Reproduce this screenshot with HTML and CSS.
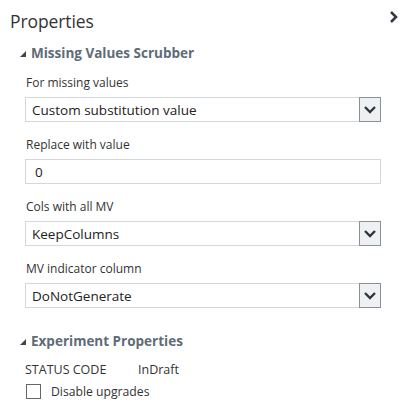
FILE: index.html
```html
<!DOCTYPE html>
<html>
<head>
<meta charset="utf-8">
<link rel="stylesheet" href="styles.css">
</head>
<body>
<div class="panel">
  <div class="title-row">
    <div class="title">Properties</div>
    <svg class="collapse" width="9" height="12" viewBox="0 0 9 12"><path d="M2 1 L7 6 L2 11" fill="none" stroke="#333a44" stroke-width="2.6"/></svg>
  </div>

  <div class="section-head">
    <svg class="tri" width="6" height="6" viewBox="0 0 6 6"><path d="M6 0 L6 6 L0 6 Z" fill="#444"/></svg>
    <span>Missing Values Scrubber</span>
  </div>

  <div class="fields">
    <div class="field">
      <div class="label">For missing values</div>
      <div class="select"><span class="value">Custom substitution value</span><span class="btn"><svg width="12" height="8" viewBox="0 0 12 8"><path d="M1 1 L6 6 L11 1" fill="none" stroke="#2f3640" stroke-width="2.4"/></svg></span></div>
    </div>
    <div class="field">
      <div class="label">Replace with value</div>
      <div class="input"><span class="value">0</span></div>
    </div>
    <div class="field">
      <div class="label">Cols with all MV</div>
      <div class="select"><span class="value">KeepColumns</span><span class="btn"><svg width="12" height="8" viewBox="0 0 12 8"><path d="M1 1 L6 6 L11 1" fill="none" stroke="#2f3640" stroke-width="2.4"/></svg></span></div>
    </div>
    <div class="field">
      <div class="label">MV indicator column</div>
      <div class="select"><span class="value">DoNotGenerate</span><span class="btn"><svg width="12" height="8" viewBox="0 0 12 8"><path d="M1 1 L6 6 L11 1" fill="none" stroke="#2f3640" stroke-width="2.4"/></svg></span></div>
    </div>
  </div>

  <div class="section-head second">
    <svg class="tri" width="6" height="6" viewBox="0 0 6 6"><path d="M6 0 L6 6 L0 6 Z" fill="#444"/></svg>
    <span>Experiment Properties</span>
  </div>

  <div class="status">
    <span class="status-key">STATUS CODE</span>
    <span class="status-val">InDraft</span>
  </div>
  <label class="check">
    <span class="box"></span>
    <span>Disable upgrades</span>
  </label>
</div>
</body>
</html>
```

FILE: styles.css
```css
html, body {
  margin: 0;
  padding: 0;
  background: #ffffff;
}
body {
  font-family: "Open Sans", "Noto Sans", sans-serif;
  color: #333;
  width: 400px;
  height: 409px;
  overflow: hidden;
}
.panel {
  padding: 8px 1px 0 10px;
}
.title-row {
  display: flex;
  justify-content: space-between;
  align-items: flex-start;
  height: 30px;
}
.title {
  font-size: 17.5px;
  line-height: 26px;
  color: #333;
  letter-spacing: -0.1px;
}
.collapse {
  margin-top: 3px;
  margin-right: 1px;
}
.section-head {
  display: flex;
  align-items: center;
  gap: 5px;
  padding-left: 10px;
  font-size: 13.5px;
  font-weight: 700;
  color: #5e6b78;
  line-height: 18px;
  height: 20px;
  margin-top: 5px;
}
.section-head .tri {
  margin-top: 2px;
}
.section-head.second {
  margin-top: 23px;
}
.fields {
  padding-left: 15px;
  padding-right: 18px;
  margin-top: 7px;
}
.field {
  display: flex;
  flex-direction: column;
}
.label {
  font-size: 12px;
  line-height: 18px;
  color: #333;
  padding-left: 1px;
  height: 20px;
  margin-top: 4px;
}
.select, .input {
  display: flex;
  align-items: center;
  height: 25px;
  box-sizing: border-box;
  border: 1px solid #d4d8db;
  background: #fff;
  margin-top: 3px;
  margin-bottom: 0;
}
.value {
  flex: 1;
  font-size: 13.5px;
  padding-left: 6px;
  color: #222;
  line-height: 20px;
}
.input .value {
  padding-left: 9px;
}
.select {
  border-right: none;
}
.btn {
  width: 22px;
  height: 25px;
  box-sizing: border-box;
  margin: -1px 0;
  border: 1px solid #8a9097;
  background: #eef0f2;
  display: flex;
  align-items: center;
  justify-content: center;
}
.field + .field {
  margin-top: 10px;
}
.status {
  display: flex;
  padding-left: 15px;
  margin-top: 8px;
  font-size: 12.5px;
  line-height: 18px;
  color: #333;
  height: 22px;
  align-items: center;
}
.status-key {
  width: 113px;
}
.check {
  display: flex;
  align-items: center;
  gap: 10px;
  padding-left: 16px;
  font-size: 12.2px;
  color: #333;
  margin-top: 2px;
}
.box {
  width: 15px;
  height: 15px;
  box-sizing: border-box;
  border: 1px solid #666;
  background: #fff;
}
```
